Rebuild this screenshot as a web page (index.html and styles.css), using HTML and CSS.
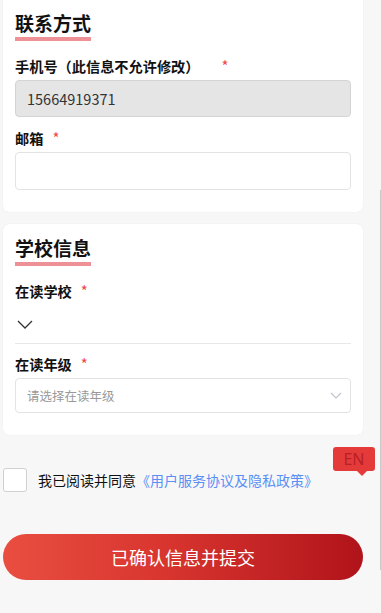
FILE: index.html
```html
<!DOCTYPE html>
<html lang="zh">
<head>
<meta charset="utf-8">
<link rel="stylesheet" href="styles.css">
</head>
<body>
<div class="page">
  <section class="card card-first">
    <h2 class="title">联系方式</h2>
    <div class="field">
      <div class="label">手机号（此信息不允许修改）<span class="req req-far">*</span></div>
      <div class="input input-disabled">15664919371</div>
    </div>
    <div class="field">
      <div class="label">邮箱<span class="req">*</span></div>
      <div class="input"></div>
    </div>
  </section>

  <section class="card">
    <h2 class="title">学校信息</h2>
    <div class="field">
      <div class="label">在读学校<span class="req">*</span></div>
      <div class="school">
        <svg class="chev-big" width="16" height="9" viewBox="0 0 16 9"><path d="M1 1 L8 8 L15 1" fill="none" stroke="#333" stroke-width="1.3"/></svg>
      </div>
    </div>
    <div class="field">
      <div class="label">在读年级<span class="req">*</span></div>
      <div class="select">
        <span class="placeholder">请选择在读年级</span>
        <svg width="12" height="7" viewBox="0 0 12 7"><path d="M1 1 L6 6 L11 1" fill="none" stroke="#c0c4cc" stroke-width="1.2"/></svg>
      </div>
    </div>
  </section>

  <div class="agree-row">
    <span class="checkbox"></span>
    <span class="agree-text">我已阅读并同意<a class="link">《用户服务协议及隐私政策》</a></span>
    <span class="en-badge">EN</span>
  </div>

  <button class="submit">已确认信息并提交</button>
</div>
<div class="scroll-line"></div>
</body>
</html>
```
FILE: styles.css
```css
* { box-sizing: border-box; }
html, body { margin: 0; padding: 0; }
body {
  background: #f7f7f7;
  font-family: "Noto Sans CJK SC", "Noto Sans", sans-serif;
  color: #111;
  width: 381px;
  height: 613px;
  overflow: hidden;
}
.page {
  width: 360px;
  margin-left: 3px;
  margin-top: 0;
  display: flex;
  flex-direction: column;
}
.card {
  background: #fff;
  border-radius: 6px;
  padding: 12px 12px 22px 12px;
  box-shadow: 0 0 1px rgba(0,0,0,0.12);
  margin-bottom: 12px;
}
.card-first { border-radius: 0 0 6px 6px; padding-top: 11px; }
.title {
  margin: 0;
  font-size: 19px;
  font-weight: 700;
  line-height: 24px;
  height: 30px;
  align-self: flex-start;
  display: inline-block;
  border-bottom: 4px solid #ee9196;
  padding-bottom: 2px;
}
.card > .title + .field { margin-top: 15px; }
.field { display: flex; flex-direction: column; }
.label {
  font-size: 14.2px;
  font-weight: 700;
  line-height: 20px;
  margin-bottom: 4px;
}
.req { color: #f04848; font-weight: 400; margin-left: 9px; font-size: 15px; }
.req-far { margin-left: 22px; }
.input {
  height: 38px;
  border: 1px solid #e3e3e3;
  border-radius: 4px;
  background: #fff;
  font-size: 14.5px;
  line-height: 36px;
  padding-left: 11px;
  color: #333;
}
.input-disabled {
  height: 37px;
  line-height: 35px;
  background: #e5e5e5;
  border-color: #d4d4d4;
  margin-bottom: 11px;
}
.school {
  height: 39px;
  border-bottom: 1px solid #e8e8e8;
  padding-left: 2px;
  padding-top: 15px;
  margin-bottom: 10px;
}
.chev-big { display: block; }
.select {
  height: 35px;
  border: 1px solid #e3e3e3;
  border-radius: 4px;
  display: flex;
  align-items: center;
  justify-content: space-between;
  padding: 0 8px 0 11px;
}
.placeholder { font-size: 12.5px; color: #999; }
.agree-row {
  display: flex;
  align-items: center;
  margin-top: 21px;
  position: relative;
}
.checkbox {
  width: 24px;
  height: 24px;
  border: 1px solid #d0d0d0;
  border-radius: 3px;
  background: #fff;
  flex: none;
}
.agree-text {
  font-size: 14px;
  margin-left: 11px;
  color: #111;
  line-height: 20px;
}
.link { color: #5a8ff5; }
.en-badge {
  position: absolute;
  left: 330px;
  top: -21px;
  width: 42px;
  height: 24px;
  background: #e53a3a;
  border-radius: 3px;
  color: #b72025;
  font-family: "Noto Sans", sans-serif;
  font-size: 16px;
  line-height: 24px;
  text-align: center;
}
.en-badge::after {
  content: "";
  position: absolute;
  left: 24px;
  bottom: -5px;
  border-left: 5px solid transparent;
  border-right: 5px solid transparent;
  border-top: 5px solid #e53a3a;
}
.submit {
  margin-top: 42px;
  height: 46px;
  width: 360px;
  border: none;
  border-radius: 23px;
  background: linear-gradient(90deg, #e94e40 0%, #d8352f 45%, #b0131a 100%);
  color: #fff;
  font-family: "Noto Sans CJK SC", sans-serif;
  font-size: 18px;
  padding: 0;
}
.scroll-line {
  position: fixed;
  left: 380px;
  top: 190px;
  width: 1px;
  height: 380px;
  background: #c9c9c9;
}
```
